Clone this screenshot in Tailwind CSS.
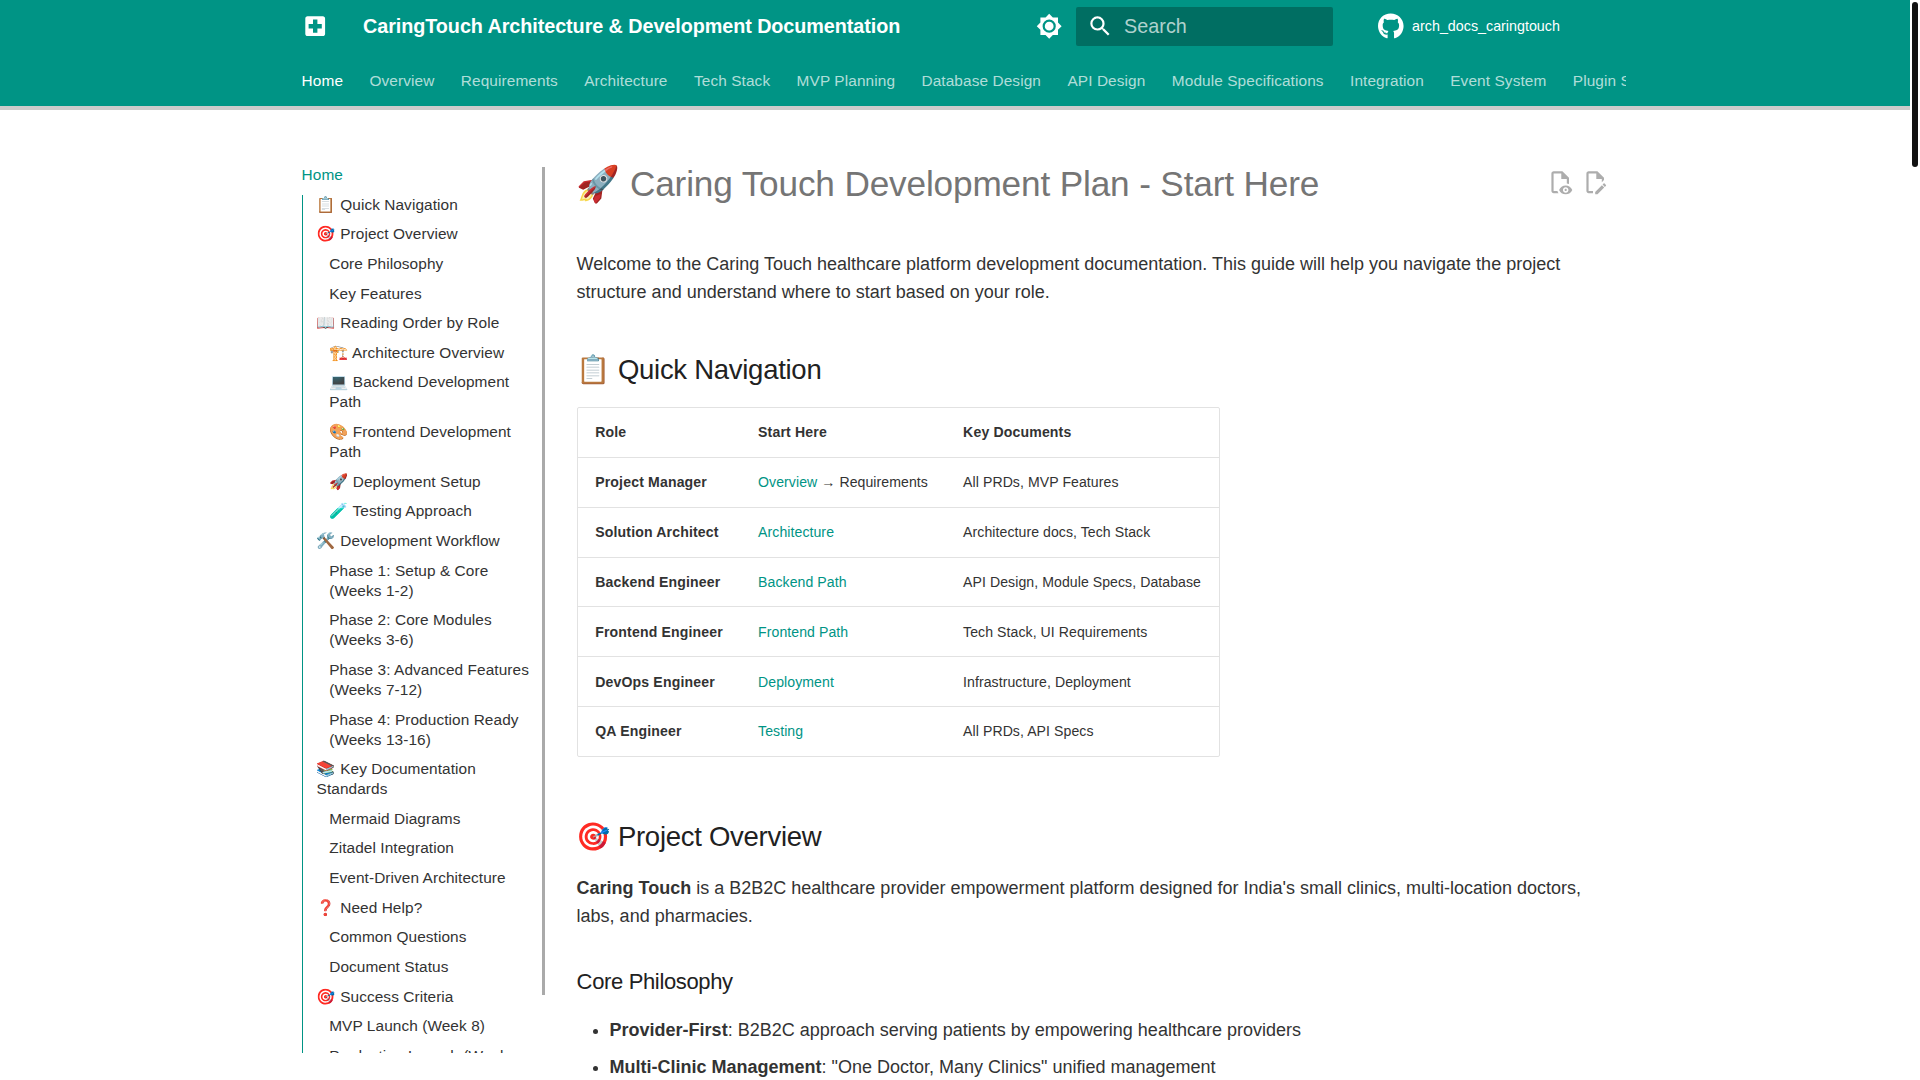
<!DOCTYPE html>
<html lang="en">
<head>
    <meta charset="UTF-8">
    <title>CaringTouch Architecture &amp; Development Documentation</title>
    <script src="https://cdn.jsdelivr.net/npm/@tailwindcss/browser@4"></script>
</head>
<body class="relative h-screen overflow-hidden bg-white text-[#212121] font-['Liberation_Sans','Noto_Color_Emoji',sans-serif]">

    <!-- Fake window scrollbar -->
    <div class="absolute top-[2px] left-[1912px] w-[6px] h-[165px] rounded-[3px] bg-[#111]"></div>

    <div class="w-[1910px]">
        <!-- Header -->
        <header class="bg-[#009485] h-[106px] text-white">
            <div class="w-[1342px] mx-auto">
                <div class="flex items-center h-[52.8px]">
                    <svg class="ml-[17.7px] w-[26.4px] h-[26.4px] flex-none" viewBox="0 0 24 24" fill="currentColor"><path d="M19 3H5c-1.1 0-1.99.9-1.99 2L3 19c0 1.1.9 2 2 2h14c1.1 0 2-.9 2-2V5c0-1.1-.9-2-2-2m-1 11h-4v4h-4v-4H6v-4h4V6h4v4h4"/></svg>
                    <div class="ml-[35px] flex-1 text-[19.8px] tracking-[-0.07px] font-bold whitespace-nowrap">CaringTouch Architecture &amp; Development Documentation</div>
                    <svg class="w-[26.4px] h-[26.4px] flex-none" viewBox="0 0 24 24" fill="currentColor"><path d="M12 8a4 4 0 0 0-4 4 4 4 0 0 0 4 4 4 4 0 0 0 4-4 4 4 0 0 0-4-4m0 10a6 6 0 0 1-6-6 6 6 0 0 1 6-6 6 6 0 0 1 6 6 6 6 0 0 1-6 6m8-9.31V4h-4.69L12 .69 8.69 4H4v4.69L.69 12 4 15.31V20h4.69L12 23.31 15.31 20H20v-4.69L23.31 12 20 8.69Z"/></svg>
                    <div class="ml-[13.5px] flex items-center w-[257px] h-[39.6px] rounded-[2px] bg-[#006e62] flex-none">
                        <svg class="ml-[10.4px] w-[26.4px] h-[26.4px] flex-none" viewBox="0 0 24 24" fill="currentColor"><path d="M9.5 3A6.5 6.5 0 0 1 16 9.5c0 1.61-.59 3.09-1.56 4.23l.27.27h.79l5 5-1.5 1.5-5-5v-.79l-.27-.27A6.516 6.516 0 0 1 9.5 16 6.5 6.5 0 0 1 3 9.5 6.5 6.5 0 0 1 9.5 3m0 2C7 5 5 7 5 9.5S7 14 9.5 14 14 12 14 9.5 12 5 9.5 5Z"/></svg>
                        <span class="ml-[11px] text-[19.8px] text-white/70">Search</span>
                    </div>
                    <div class="ml-[44.7px] w-[248px] flex items-center flex-none">
                        <svg class="w-[25.6px] h-[26.4px] flex-none" viewBox="0 0 496 512" fill="currentColor"><path d="M165.9 397.4c0 2-2.3 3.6-5.2 3.6-3.3 0-5.6-1.6-5.6-3.6 0-2 2.3-3.6 5.2-3.6 3-.3 5.6 1.3 5.6 3.6zm-31.1-4.5c-.7 2 1.3 4.3 4.3 4.9 2.6 1 5.6 0 6.2-2s-1.3-4.3-4.3-5c-2.6-.7-5.5.3-6.2 2.1zm44.2-1.7c-2.9.7-4.9 2.6-4.6 4.9.3 2 2.9 3.3 5.9 2.6 2.9-.7 4.9-2.6 4.6-4.6-.3-1.9-3-3.2-5.9-2.9zM244.8 8C106.1 8 0 113.3 0 252c0 110.9 69.8 205.8 169.5 239.2 12.8 2.3 17.3-5.6 17.3-12.1 0-6.2-.3-40.4-.3-61.4 0 0-70 15-84.7-29.8 0 0-11.4-29.1-27.8-36.6 0 0-22.9-15.7 1.6-16 0 0 24.9 2 38.6 25.8 21.9 38.6 58.6 27.5 72.9 20.9 2.3-16 8.8-27.1 16-33.7-55.9-6.2-112.3-14.3-112.3-110.5 0-27.5 7.6-41.3 23.6-58.9-2.6-6.5-11.1-33.3 2.6-67.9 20.9-6.5 69 27 69 27 20-5.6 41.5-8.5 62.8-8.5s42.8 2.9 62.8 8.5c0 0 48.1-33.6 69-27 13.7 34.7 5.2 61.4 2.6 67.9 16 17.7 25.8 31.5 25.8 58.9 0 96.5-58.9 104.2-114.8 110.5 9.2 7.9 17 22.9 17 46.4 0 33.7-.3 75.4-.3 83.6 0 6.5 4.6 14.4 17.3 12.1C428.2 457.8 496 362.9 496 252 496 113.3 383.5 8 244.8 8zM97.2 352.9c-1.3 1-1 3.3.7 5.2 1.6 1.6 3.9 2.3 5.2 1 1.3-1 1-3.3-.7-5.2-1.6-1.6-3.9-2.3-5.2-1zm-10.8-8.1c-.7 1.3.3 2.9 2.3 3.9 1.6 1 3.6.7 4.3-.7.7-1.3-.3-2.9-2.3-3.9-2-.6-3.6-.3-4.3.7zm32.4 35.6c-1.6 1.3-1 4.3 1.3 6.2 2.3 2.3 5.2 2.6 6.5 1 1.3-1.3.7-4.3-1.3-6.2-2.2-2.3-5.2-2.6-6.5-1zm-11.4-14.7c-1.6 1-1.6 3.6 0 5.9 1.6 2.3 4.3 3.3 5.6 2.3 1.6-1.3 1.6-3.9 0-6.2-1.4-2.3-4-3.3-5.6-2z"/></svg>
                        <span class="ml-[8.5px] text-[14.3px] whitespace-nowrap">arch_docs_caringtouch</span>
                    </div>
                </div>
                <!-- Tabs -->
                <nav class="h-[53.2px] ml-[17.6px] overflow-hidden">
                    <ul class="flex gap-[26.4px] pt-[18px] text-[15.4px] tracking-[0.1px] leading-[20px] whitespace-nowrap text-white/70">
                        <li class="text-white">Home</li>
                        <li>Overview</li>
                        <li>Requirements</li>
                        <li>Architecture</li>
                        <li>Tech Stack</li>
                        <li>MVP Planning</li>
                        <li>Database Design</li>
                        <li>API Design</li>
                        <li>Module Specifications</li>
                        <li>Integration</li>
                        <li>Event System</li>
                        <li>Plugin System</li>
                        <li>Deployment</li>
                    </ul>
                </nav>
            </div>
        </header>
        <div class="h-[4px] bg-[#cbcbcb]"></div>

        <div class="w-[1342px] mx-auto flex">
            <!-- Sidebar -->
            <aside class="relative ml-[17.6px] mt-[55px] w-[243px] h-[888px] flex-none overflow-hidden pr-[11px] text-[15.4px] tracking-[0.08px] leading-[20px] text-[#333]">
                <div class="absolute right-0 top-[2px] w-[3px] h-[828px] bg-[#aaaaaa]"></div>
                <div class="text-[#009485]">Home</div>
                <ul class="mt-[9.6px] ml-[0.5px] border-l border-[#009485] pl-[13.5px] space-y-[9.65px]">
                    <li>📋 Quick Navigation</li>
                    <li>🎯 Project Overview
                        <ul class="mt-[9.65px] pl-[12.6px] space-y-[9.65px]">
                            <li>Core Philosophy</li>
                            <li>Key Features</li>
                        </ul>
                    </li>
                    <li>📖 Reading Order by Role
                        <ul class="mt-[9.65px] pl-[12.6px] space-y-[9.65px]">
                            <li>🏗️ Architecture Overview</li>
                            <li>💻 Backend Development Path</li>
                            <li>🎨 Frontend Development Path</li>
                            <li>🚀 Deployment Setup</li>
                            <li>🧪 Testing Approach</li>
                        </ul>
                    </li>
                    <li>🛠️ Development Workflow
                        <ul class="mt-[9.65px] pl-[12.6px] space-y-[9.65px]">
                            <li>Phase 1: Setup &amp; Core (Weeks 1-2)</li>
                            <li>Phase 2: Core Modules (Weeks 3-6)</li>
                            <li>Phase 3: Advanced Features (Weeks 7-12)</li>
                            <li>Phase 4: Production Ready (Weeks 13-16)</li>
                        </ul>
                    </li>
                    <li>📚 Key Documentation Standards
                        <ul class="mt-[9.65px] pl-[12.6px] space-y-[9.65px]">
                            <li>Mermaid Diagrams</li>
                            <li>Zitadel Integration</li>
                            <li>Event-Driven Architecture</li>
                        </ul>
                    </li>
                    <li>❓ Need Help?
                        <ul class="mt-[9.65px] pl-[12.6px] space-y-[9.65px]">
                            <li>Common Questions</li>
                            <li>Document Status</li>
                        </ul>
                    </li>
                    <li>🎯 Success Criteria
                        <ul class="mt-[9.65px] pl-[12.6px] space-y-[9.65px]">
                            <li>MVP Launch (Week 8)</li>
                            <li>Production Launch (Week 16)</li>
                        </ul>
                    </li>
                </ul>
            </aside>

            <!-- Content -->
            <main class="ml-[32px] w-[1031px] flex-none pt-[50.5px] text-[18px] leading-[28.16px] text-[#333]">
                <div class="flex items-start justify-between">
                    <h1 class="text-[35.2px] leading-[45.76px] tracking-[-0.15px] text-[#757575]">🚀 Caring Touch Development Plan - Start Here</h1>
                    <div class="flex gap-[8.6px] mt-[8.5px] -mr-[1px] text-[#adadad]">
                        <svg class="w-[26.4px] h-[26.4px]" viewBox="0 0 24 24" fill="currentColor"><path d="M17 18C17.56 18 18 18.44 18 19S17.56 20 17 20 16 19.56 16 19 16.44 18 17 18M17 15C14.27 15 11.94 16.66 11 19C11.94 21.34 14.27 23 17 23S22.06 21.34 23 19C22.06 16.66 19.73 15 17 15M17 21.5C15.62 21.5 14.5 20.38 14.5 19S15.62 16.5 17 16.5 19.5 17.62 19.5 19 18.38 21.5 17 21.5M6 2C4.9 2 4 2.9 4 4V20C4 21.1 4.9 22 6 22H10.5C10.1 21.4 9.7 20.7 9.5 20H6V4H13V9H18V13.1C18.7 13.2 19.4 13.4 20 13.7V8L14 2H6Z"/></svg>
                        <svg class="w-[26.4px] h-[26.4px]" viewBox="0 0 24 24" fill="currentColor"><path d="M6 2C4.9 2 4 2.9 4 4V20C4 21.1 4.9 22 6 22H10V20.1L10.1 20H6V4H13V9H18V12.1L20 10.1V8L14 2H6M20.1 13C20 13 19.8 13.1 19.7 13.2L18.7 14.2L20.8 16.3L21.8 15.3C22 15.1 22 14.7 21.8 14.5L20.5 13.2C20.4 13.1 20.3 13 20.1 13M18.1 14.8L12 20.9V23H14.1L20.2 16.9L18.1 14.8Z"/></svg>
                    </div>
                </div>
                <p class="mt-[43.7px]">Welcome to the Caring Touch healthcare platform development documentation. This guide will help you navigate the project structure and understand where to start based on your role.</p>

                <h2 class="mt-[44.7px] text-[27.5px] leading-[38.5px] tracking-[-0.01em] text-[#212121]">📋 Quick Navigation</h2>
                <table class="mt-[17.5px] border-separate border-spacing-0 border border-[#e2e2e2] rounded-[2px] text-[14.08px] tracking-[0.07px] leading-[22.5px] whitespace-nowrap">
                    <thead>
                        <tr class="text-left">
                            <th class="px-[17.6px] py-[13.2px] font-bold tracking-[0.15px]">Role</th>
                            <th class="px-[17.6px] py-[13.2px] font-bold tracking-[0.15px]">Start Here</th>
                            <th class="px-[17.6px] py-[13.2px] font-bold tracking-[0.15px]">Key Documents</th>
                        </tr>
                    </thead>
                    <tbody>
                        <tr>
                            <td class="px-[17.6px] py-[13.2px] border-t border-[#e2e2e2] font-bold tracking-[0.15px]">Project Manager</td>
                            <td class="px-[17.6px] py-[13.2px] border-t border-[#e2e2e2]"><a class="text-[#009485]">Overview</a> → Requirements</td>
                            <td class="px-[17.6px] py-[13.2px] border-t border-[#e2e2e2]">All PRDs, MVP Features</td>
                        </tr>
                        <tr>
                            <td class="px-[17.6px] py-[13.2px] border-t border-[#e2e2e2] font-bold tracking-[0.15px]">Solution Architect</td>
                            <td class="px-[17.6px] py-[13.2px] border-t border-[#e2e2e2]"><a class="text-[#009485]">Architecture</a></td>
                            <td class="px-[17.6px] py-[13.2px] border-t border-[#e2e2e2]">Architecture docs, Tech Stack</td>
                        </tr>
                        <tr>
                            <td class="px-[17.6px] py-[13.2px] border-t border-[#e2e2e2] font-bold tracking-[0.15px]">Backend Engineer</td>
                            <td class="px-[17.6px] py-[13.2px] border-t border-[#e2e2e2]"><a class="text-[#009485]">Backend Path</a></td>
                            <td class="px-[17.6px] py-[13.2px] border-t border-[#e2e2e2]">API Design, Module Specs, Database</td>
                        </tr>
                        <tr>
                            <td class="px-[17.6px] py-[13.2px] border-t border-[#e2e2e2] font-bold tracking-[0.15px]">Frontend Engineer</td>
                            <td class="px-[17.6px] py-[13.2px] border-t border-[#e2e2e2]"><a class="text-[#009485]">Frontend Path</a></td>
                            <td class="px-[17.6px] py-[13.2px] border-t border-[#e2e2e2]">Tech Stack, UI Requirements</td>
                        </tr>
                        <tr>
                            <td class="px-[17.6px] py-[13.2px] border-t border-[#e2e2e2] font-bold tracking-[0.15px]">DevOps Engineer</td>
                            <td class="px-[17.6px] py-[13.2px] border-t border-[#e2e2e2]"><a class="text-[#009485]">Deployment</a></td>
                            <td class="px-[17.6px] py-[13.2px] border-t border-[#e2e2e2]">Infrastructure, Deployment</td>
                        </tr>
                        <tr>
                            <td class="px-[17.6px] py-[13.2px] border-t border-[#e2e2e2] font-bold tracking-[0.15px]">QA Engineer</td>
                            <td class="px-[17.6px] py-[13.2px] border-t border-[#e2e2e2]"><a class="text-[#009485]">Testing</a></td>
                            <td class="px-[17.6px] py-[13.2px] border-t border-[#e2e2e2]">All PRDs, API Specs</td>
                        </tr>
                    </tbody>
                </table>

                <h2 class="mt-[60.5px] text-[27.5px] leading-[38.5px] tracking-[-0.01em] text-[#212121]">🎯 Project Overview</h2>
                <p class="mt-[18px]"><strong class="font-bold">Caring Touch</strong> is a B2B2C healthcare provider empowerment platform designed for India's small clinics, multi-location doctors, labs, and pharmacies.</p>

                <h3 class="mt-[35px] text-[22px] leading-[33px] tracking-[-0.35px] text-[#212121]">Core Philosophy</h3>
                <ul class="mt-[18px] ml-[33px] list-disc space-y-[8.8px]">
                    <li><strong class="font-bold">Provider-First</strong>: B2B2C approach serving patients by empowering healthcare providers</li>
                    <li><strong class="font-bold">Multi-Clinic Management</strong>: "One Doctor, Many Clinics" unified management</li>
                </ul>
            </main>
        </div>
    </div>
</body>
</html>
